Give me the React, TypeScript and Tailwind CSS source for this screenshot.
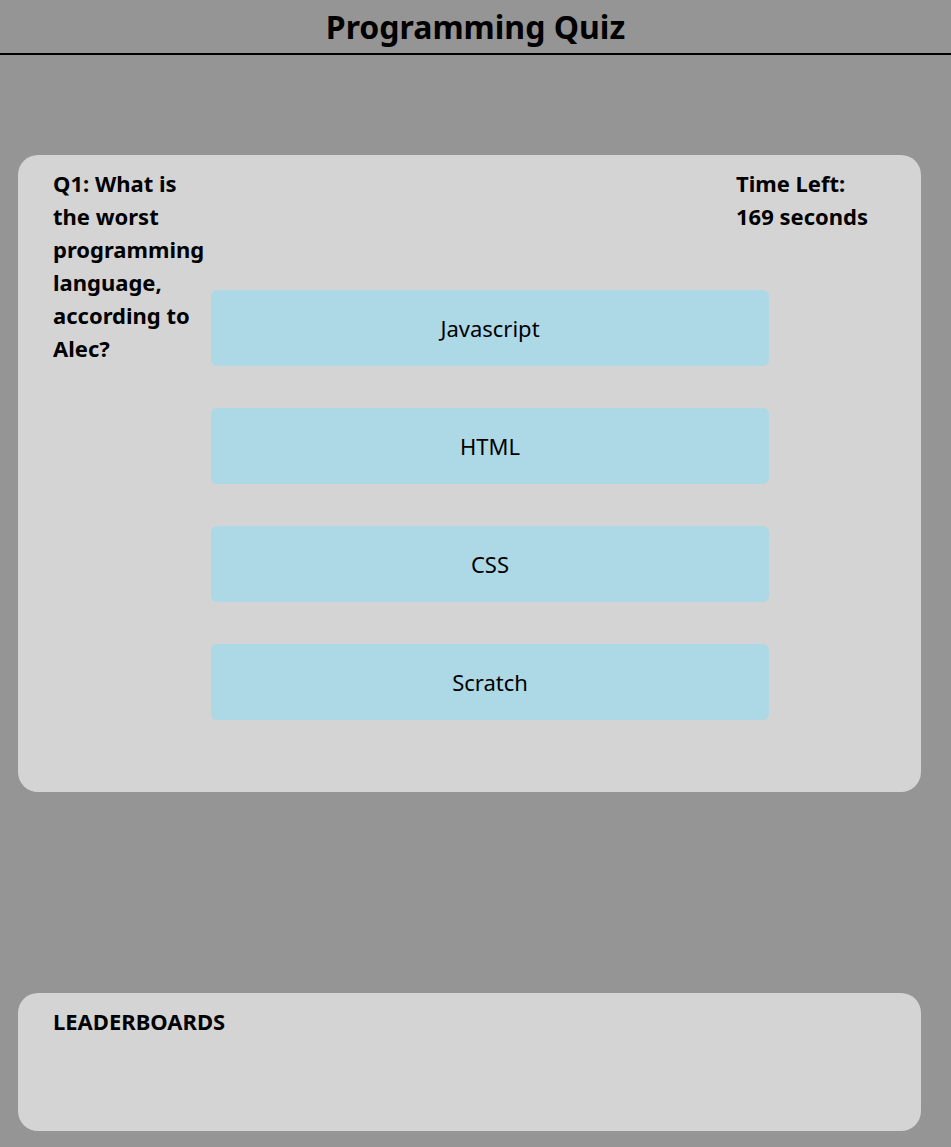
const answers = ["Javascript", "HTML", "CSS", "Scratch"];

function App() {
  return (
    <div className='min-h-[1147px] w-full bg-[#959595] text-black font-["Comic_Sans_MS","Comic_Sans","Noto_Sans",sans-serif]'>
      <header className="h-[55px] border-b-2 border-black flex items-center justify-center">
        <h1 className="text-[32px] font-bold leading-none">Programming Quiz</h1>
      </header>

      <main className="pl-[18px] pr-[30px] pt-[100px] pb-4 flex flex-col gap-[201px]">
        <section className="bg-[#d4d4d4] rounded-[20px] pt-3 pb-[72px] pl-[35px] flex flex-row">
          <h2 className="w-[158px] shrink-0 pr-2 text-[22px] font-bold leading-[33px]">
            Q1: What is the worst programming language, according to Alec?
          </h2>
          <div className="flex flex-col">
            <p className="ml-[525px] h-[123px] text-[22px] font-bold leading-[33px] whitespace-nowrap">
              Time Left:
              <br />
              169 seconds
            </p>
            <div className="flex flex-col gap-[42px]">
              {answers.map((a) => (
                <button
                  key={a}
                  className="w-[558px] h-[76px] rounded-md bg-[#add8e6] text-[22px] flex items-center justify-center"
                >
                  {a}
                </button>
              ))}
            </div>
          </div>
        </section>

        <section className="bg-[#d4d4d4] rounded-[20px] h-[138px] pt-3 pl-[35px]">
          <h2 className="text-[22px] font-bold leading-[33px]">LEADERBOARDS</h2>
        </section>
      </main>
    </div>
  );
}

export default App;
